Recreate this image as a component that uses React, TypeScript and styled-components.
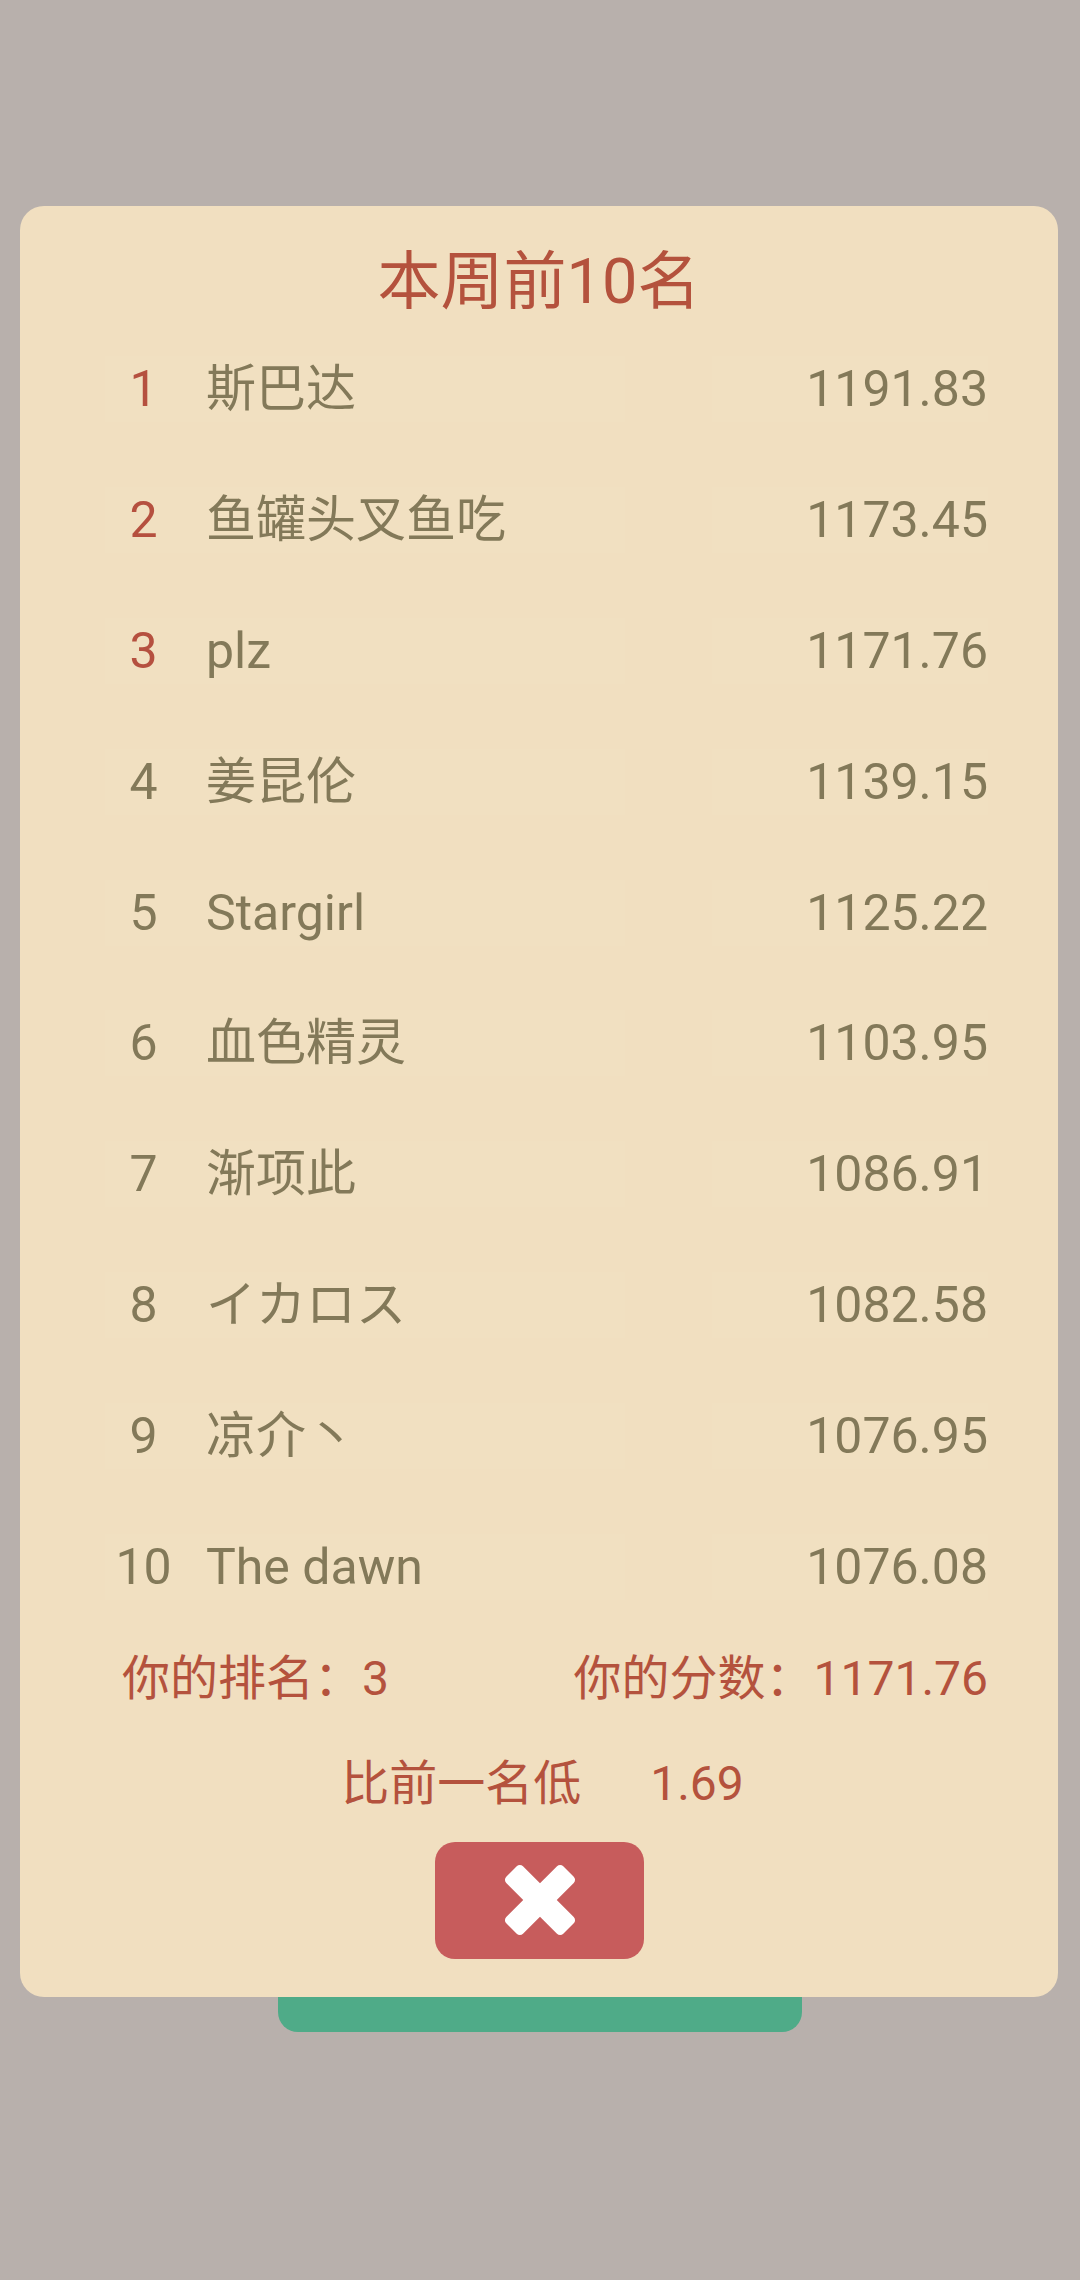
import styled, { createGlobalStyle } from "styled-components";

type Entry = {
    rank: number,
    name: string,
    score: string
}

const entries: Entry[] = [
    { rank: 1, name: "斯巴达", score: "1191.83" },
    { rank: 2, name: "鱼罐头叉鱼吃", score: "1173.45" },
    { rank: 3, name: "plz", score: "1171.76" },
    { rank: 4, name: "姜昆伦", score: "1139.15" },
    { rank: 5, name: "Stargirl", score: "1125.22" },
    { rank: 6, name: "血色精灵", score: "1103.95" },
    { rank: 7, name: "渐项此", score: "1086.91" },
    { rank: 8, name: "イカロス", score: "1082.58" },
    { rank: 9, name: "凉介丶", score: "1076.95" },
    { rank: 10, name: "The dawn", score: "1076.08" },
];

const GlobalStyle = createGlobalStyle`
    html, body {
        margin: 0;
        padding: 0;
        background: #b8b0ac;
    }
    body {
        font-family: Roboto, "Noto Sans CJK SC", "Noto Sans", sans-serif;
    }
`

const CloseIcon = () => (
    <svg width="74" height="74" viewBox="0 0 100 100">
        <rect x="-4.5" y="34" width="109" height="32" rx="6" fill="#fff" transform="rotate(45 50 50)" />
        <rect x="-4.5" y="34" width="109" height="32" rx="6" fill="#fff" transform="rotate(-45 50 50)" />
    </svg>
);

const App = () => {
    return (
        <Screen>
            <GlobalStyle />
            <Page>
                <StartButton />
            </Page>
            <Overlay>
                <Dialog>
                    <Title>本周前10名</Title>
                    <List>
                        {entries.map((e) => (
                            <Row key={e.rank}>
                                <RankCell $top={e.rank <= 3}>{e.rank}</RankCell>
                                <NameCell>{e.name}</NameCell>
                                <ScoreCell>{e.score}</ScoreCell>
                            </Row>
                        ))}
                    </List>
                    <Summary>
                        <SummaryText>你的排名：3</SummaryText>
                        <SummaryText>你的分数：1171.76</SummaryText>
                    </Summary>
                    <DiffRow>
                        <DiffText>比前一名低</DiffText>
                        <DiffValue>1.69</DiffValue>
                    </DiffRow>
                    <CloseButton aria-label="close">
                        <CloseIcon />
                    </CloseButton>
                </Dialog>
            </Overlay>
        </Screen>
    );
}

const Screen = styled.div`
    position: relative;
    width: 1080px;
    height: 2280px;
    overflow: hidden;
    background: #b8b0ac;
`
const Page = styled.div`
    padding-top: 1880px;
    display: flex;
    justify-content: center;
`
const StartButton = styled.div`
    width: 524px;
    height: 152px;
    background: #4fab88;
    border-radius: 20px;
`
const Overlay = styled.div`
    position: absolute;
    inset: 0;
`
const Dialog = styled.div`
    margin: 206px 0 0 20px;
    width: 1038px;
    box-sizing: border-box;
    background: #f1dfc0;
    border-radius: 24px;
    padding: 20px 70px 38px 85px;
    display: flex;
    flex-direction: column;
`
const Title = styled.div`
    height: 98px;
    display: flex;
    align-items: center;
    justify-content: center;
    font-size: 63px;
    color: #b4523d;
    padding-right: 15px;
`
const List = styled.div`
    display: flex;
    flex-direction: column;
`
const Row = styled.div`
    height: 130.8px;
    display: flex;
    align-items: center;
    font-size: 50px;
    line-height: 1;
    color: #837959;
`
const Cell = styled.div`
    height: 66px;
    display: flex;
    align-items: center;
    background: rgba(255, 250, 240, 0.04);
`
const RankCell = styled(Cell)<{ $top: boolean }>`
    width: 77px;
    justify-content: center;
    color: ${(p) => (p.$top ? "#b5503f" : "#837959")};
`
const NameCell = styled(Cell)`
    width: 443px;
    padding-left: 24px;
    box-sizing: border-box;
`
const ScoreCell = styled(Cell)`
    margin-left: auto;
    width: 276px;
    justify-content: flex-end;
`
const Summary = styled.div`
    height: 94px;
    display: flex;
    align-items: center;
    justify-content: space-between;
    padding-left: 17px;
`
const SummaryText = styled.span`
    font-size: 48px;
    line-height: 1;
    color: #b4523d;
`
const DiffRow = styled.div`
    margin-top: 8px;
    height: 100px;
    display: flex;
    align-items: center;
    justify-content: center;
    gap: 69px;
    padding-right: 8px;
    font-size: 48px;
    line-height: 1;
    color: #b4523d;
`
const DiffText = styled.span``
const DiffValue = styled.span`
    font-family: Roboto, sans-serif;
`
const CloseButton = styled.button`
    margin: 8px auto 0;
    width: 209px;
    height: 117px;
    border: none;
    border-radius: 20px;
    background: #c75c5c;
    display: flex;
    align-items: center;
    justify-content: center;
    padding: 0;
    position: relative;
    left: -7px;
`

export default App;
